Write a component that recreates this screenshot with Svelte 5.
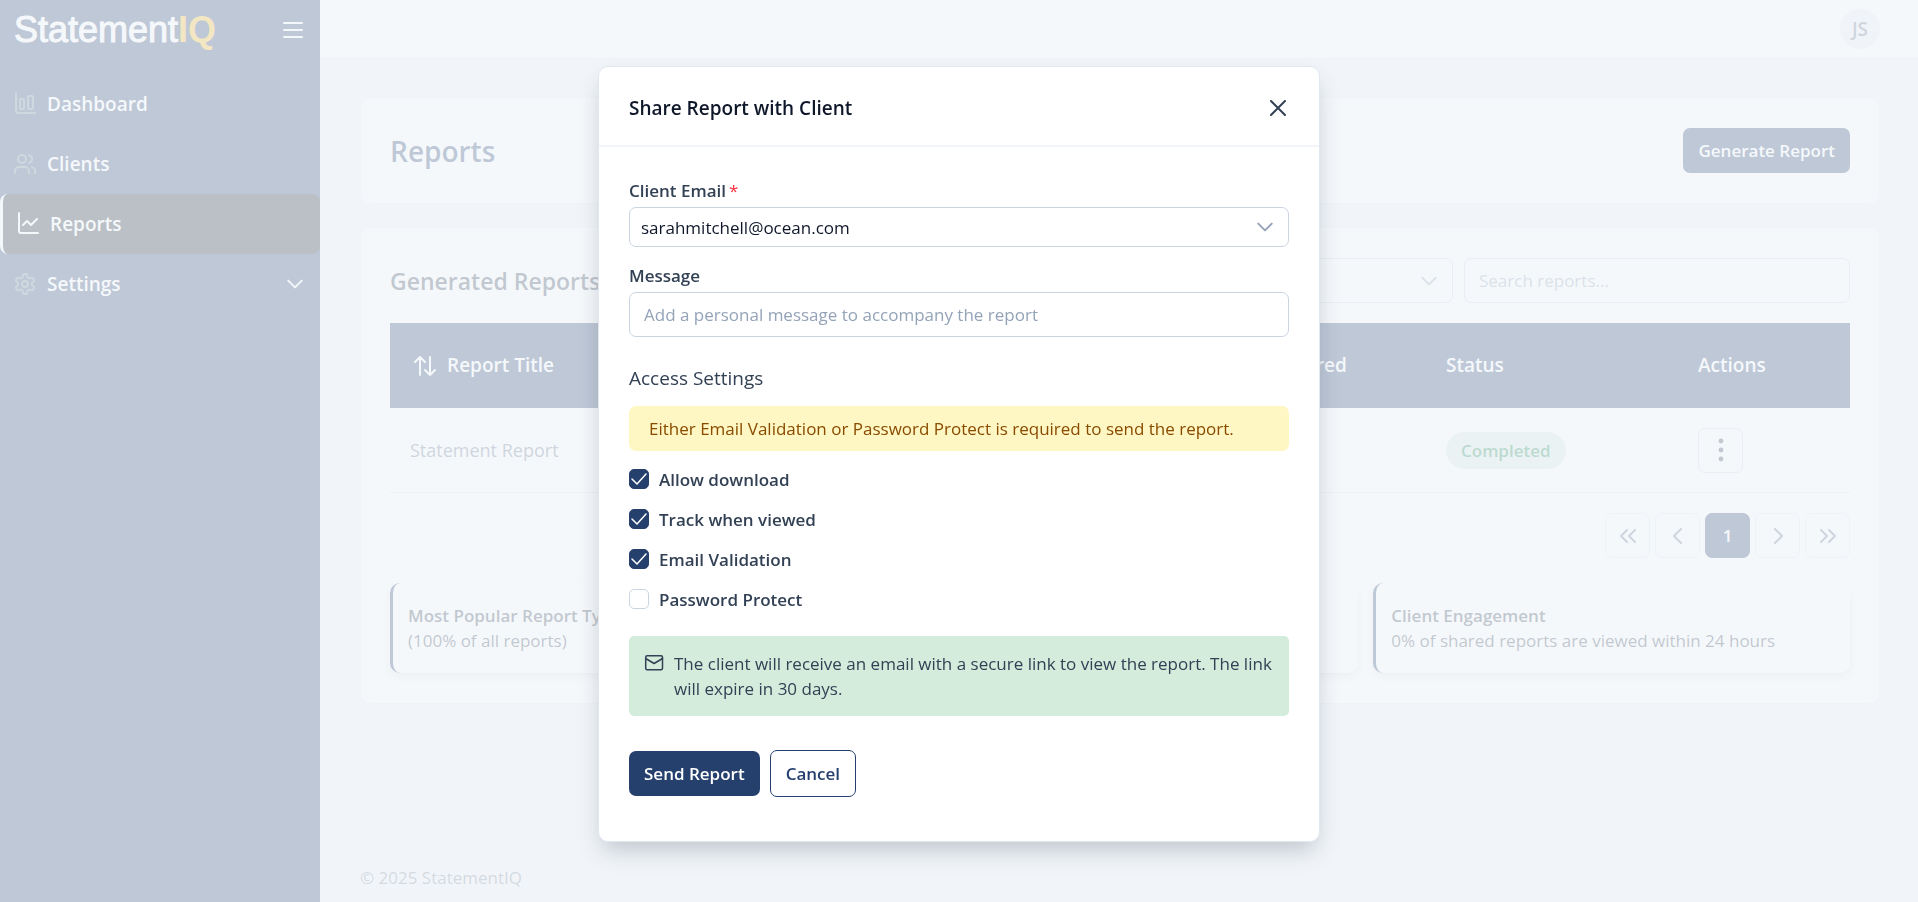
<!--
  Reports page with the "Share Report with Client" dialog open on top of it.
-->
<script>
  let open = $state(true);
  let email = $state('sarahmitchell@ocean.com');
  let message = $state('');
  let search = $state('');
  let status = $state('all');

  let access = $state([
    { id: 'download', label: 'Allow download', on: true },
    { id: 'track', label: 'Track when viewed', on: true },
    { id: 'validate', label: 'Email Validation', on: true },
    { id: 'password', label: 'Password Protect', on: false },
  ]);

  const STATS = [
    { title: 'Most Popular Report Type', text: '(100% of all reports)' },
    { title: 'Average Time to View', text: 'No reports viewed yet' },
    { title: 'Client Engagement', text: '0% of shared reports are viewed within 24 hours' },
  ];

  const close = () => (open = false);
</script>

{#snippet chevron(size)}
  <svg class="chevron" width={size} height={size} viewBox="0 0 16 16"><path d="M2 5l6 6 6-6" /></svg>
{/snippet}

<div class="app">
  <aside>
    <div class="brand">
      <a class="logo" href="#home">Statement<b>IQ</b></a>
      <button class="burger" aria-label="Toggle menu">
        <svg width="20" height="20" viewBox="0 0 20 20"><path d="M1 3h18M1 10h18M1 17h18" /></svg>
      </button>
    </div>
    <nav>
      <a href="#dashboard">
        <svg width="24" height="24" viewBox="0 0 24 24"><path d="M3 1v18a2 2 0 0 0 2 2h17" /><rect x="7" y="7" width="4" height="10" rx="1" /><rect x="15" y="4" width="5" height="13" rx="1" /></svg>
        <span>Dashboard</span>
      </a>
      <a href="#clients">
        <svg width="24" height="24" viewBox="0 0 24 24"><path d="M16 21v-2a4 4 0 0 0-4-4H6a4 4 0 0 0-4 4v2" /><circle cx="9" cy="7" r="4" /><path d="M22 21v-2a4 4 0 0 0-3-3.87M16 3.13a4 4 0 0 1 0 7.75" /></svg>
        <span>Clients</span>
      </a>
      <a href="#reports" class="active">
        <svg width="24" height="24" viewBox="0 0 24 24"><path d="M3 1v18a2 2 0 0 0 2 2h17M7 13l4-4 4 4 6-6" /></svg>
        <span>Reports</span>
      </a>
      <a href="#settings">
        <svg width="24" height="24" viewBox="0 0 24 24"><path d="M12.22 2h-.44a2 2 0 0 0-2 2v.18a2 2 0 0 1-1 1.73l-.43.25a2 2 0 0 1-2 0l-.15-.08a2 2 0 0 0-2.73.73l-.22.38a2 2 0 0 0 .73 2.73l.15.1a2 2 0 0 1 1 1.72v.51a2 2 0 0 1-1 1.74l-.15.09a2 2 0 0 0-.73 2.73l.22.38a2 2 0 0 0 2.73.73l.15-.08a2 2 0 0 1 2 0l.43.25a2 2 0 0 1 1 1.73V20a2 2 0 0 0 2 2h.44a2 2 0 0 0 2-2v-.18a2 2 0 0 1 1-1.73l.43-.25a2 2 0 0 1 2 0l.15.08a2 2 0 0 0 2.73-.73l.22-.39a2 2 0 0 0-.73-2.73l-.15-.08a2 2 0 0 1-1-1.74v-.5a2 2 0 0 1 1-1.74l.15-.09a2 2 0 0 0 .73-2.73l-.22-.38a2 2 0 0 0-2.73-.73l-.15.08a2 2 0 0 1-2 0l-.43-.25a2 2 0 0 1-1-1.73V4a2 2 0 0 0-2-2z" /><circle cx="12" cy="12" r="3" /></svg>
        <span>Settings</span>
        {@render chevron(18)}
      </a>
    </nav>
  </aside>

  <div class="page">
    <div class="topbar"><button class="avatar">JS</button></div>

    <main>
      <section class="card title-card">
        <h1>Reports</h1>
        <button class="primary">Generate Report</button>
      </section>

      <section class="card">
        <div class="toolbar">
          <h2>Generated Reports</h2>
          <div class="select filter">
            <select bind:value={status} aria-label="Status"><option value="all">All Status</option></select>
            {@render chevron(18)}
          </div>
          <input class="field search" bind:value={search} placeholder="Search reports..." aria-label="Search reports" />
        </div>

        <table>
          <colgroup><col class="c-title" /><col class="c-client" /><col class="c-date" /><col class="c-status" /><col class="c-actions" /></colgroup>
          <thead>
            <tr>
              <th>
                <span class="sort">
                  <svg width="24" height="24" viewBox="0 0 24 24"><path d="M7 21V3M2 8l5-5 5 5M17 3v18M12 16l5 5 5-5" /></svg>
                  Report Title
                </span>
              </th>
              <th>Client</th>
              <th>Date Shared</th>
              <th>Status</th>
              <th>Actions</th>
            </tr>
          </thead>
          <tbody>
            <tr>
              <td>Statement Report</td>
              <td></td>
              <td></td>
              <td><span class="pill">Completed</span></td>
              <td>
                <button class="square kebab" aria-label="Row actions">
                  <svg width="6" height="24" viewBox="0 0 6 24"><circle cx="3" cy="3" r="2.4" /><circle cx="3" cy="12" r="2.4" /><circle cx="3" cy="21" r="2.4" /></svg>
                </button>
              </td>
            </tr>
          </tbody>
        </table>

        <div class="pager">
          <button class="square" aria-label="First page"><svg width="20" height="20" viewBox="0 0 20 20"><path d="M9 4l-6 6 6 6M17 4l-6 6 6 6" /></svg></button>
          <button class="square" aria-label="Previous page"><svg width="20" height="20" viewBox="0 0 20 20"><path d="M13 3l-7 7 7 7" /></svg></button>
          <button class="square current">1</button>
          <button class="square" aria-label="Next page"><svg width="20" height="20" viewBox="0 0 20 20"><path d="M7 3l7 7-7 7" /></svg></button>
          <button class="square" aria-label="Last page"><svg width="20" height="20" viewBox="0 0 20 20"><path d="M3 4l6 6-6 6M11 4l6 6-6 6" /></svg></button>
        </div>

        <div class="stats">
          {#each STATS as s}
            <div class="stat"><strong>{s.title}</strong><span>{s.text}</span></div>
          {/each}
        </div>
      </section>
    </main>

    <footer>© 2025 StatementIQ</footer>
  </div>
</div>

{#if open}
  <div class="backdrop">
    <div class="modal" role="dialog" aria-modal="true" aria-labelledby="share-title">
      <header>
        <h3 id="share-title">Share Report with Client</h3>
        <button class="close" aria-label="Close" onclick={close}>
          <svg width="16" height="16" viewBox="0 0 16 16"><path d="M1 1l14 14M15 1L1 15" /></svg>
        </button>
      </header>

      <form onsubmit={(e) => e.preventDefault()}>
        <div class="group">
          <label for="email">Client Email<span class="req">*</span></label>
          <div class="select">
            <select id="email" bind:value={email}><option>sarahmitchell@ocean.com</option></select>
            {@render chevron(18)}
          </div>
        </div>
        <div class="group">
          <label for="message">Message</label>
          <input id="message" class="field" bind:value={message} placeholder="Add a personal message to accompany the report" />
        </div>

        <h4>Access Settings</h4>
        <p class="warn">Either Email Validation or Password Protect is required to send the report.</p>
        <div class="checks">
          {#each access as a}
            <label class="check" for={a.id}>
              <span class="box">
                <input type="checkbox" id={a.id} bind:checked={a.on} />
                <svg width="20" height="20" viewBox="0 0 20 20"><path d="M3 10l5 5 9-10" /></svg>
              </span>
              {a.label}
            </label>
          {/each}
        </div>

        <div class="note">
          <svg width="20" height="20" viewBox="0 0 20 20"><rect x="1.7" y="2.7" width="16.8" height="14" rx="1.5" /><path d="M1.7 5.5l8.4 5 8.4-5" /></svg>
          <p>The client will receive an email with a secure link to view the report. The link will expire in 30 days.</p>
        </div>

        <div class="actions">
          <button class="primary" type="submit">Send Report</button>
          <button class="outline" type="button" onclick={close}>Cancel</button>
        </div>
      </form>
    </div>
  </div>
{/if}

<style>
  :global(body) { margin: 0; background: #f0f4f9; }
  .app, .backdrop { font-family: "Segoe UI", "Open Sans", "Noto Sans", sans-serif; font-size: 17px; line-height: 25px; color: #334155; }
  .app *, .backdrop * { box-sizing: border-box; }
  .app { display: flex; min-height: 100vh; }
  button, input, select { font: inherit; color: inherit; }
  button { cursor: pointer; }
  h1, h2, h3, h4, p { margin: 0; }
  a { color: inherit; text-decoration: none; }
  svg { fill: none; stroke: currentColor; stroke-width: 2; stroke-linecap: round; stroke-linejoin: round; flex: none; display: block; }

  aside { width: 320px; flex: none; background: #26406e; color: #fff; }
  .brand { height: 60px; padding: 0 17px 0 14px; display: flex; align-items: center; justify-content: space-between; }
  .logo { font-family: "Liberation Sans", Arial, sans-serif; font-size: 36px; line-height: 60px; -webkit-text-stroke: 1px #fff; }
  .logo b { color: #f5b81c; -webkit-text-stroke: 0; }
  .burger { background: none; border: none; padding: 0; color: #fff; }
  nav { padding-top: 14px; font-size: 19px; font-weight: 600; }
  nav a { height: 60px; padding: 0 16px 0 13px; display: flex; align-items: center; gap: 10px; border-radius: 8px; }
  nav a > svg:first-child { color: #64808f; }
  nav .chevron { margin-left: auto; }
  nav a.active { background: #15222e; border-left: 3px solid #fff; }
  nav a.active > svg:first-child { color: #fff; }
  .chevron { stroke-width: 1.7; }

  .page { flex: 1; min-width: 0; display: flex; flex-direction: column; }
  .topbar { height: 59px; padding: 0 38px; background: #fff; border-bottom: 1px solid #e9eef5; display: flex; align-items: center; justify-content: flex-end; }
  .avatar { width: 40px; height: 40px; border: none; border-radius: 50%; padding: 0; background: #eceff6; color: #64748b; font-size: 19px; font-weight: 600; }
  main { flex: 1; padding: 38px 38px 0 40px; display: flex; flex-direction: column; gap: 23px; }
  .card { background: #fff; border: 1px solid #e9eef5; border-radius: 10px; padding: 30px 29px; }
  .title-card { display: flex; align-items: center; justify-content: space-between; }
  h1 { font-size: 28px; line-height: 40px; font-weight: 600; color: #26406e; }
  h2 { font-size: 23px; line-height: 30px; font-weight: 600; color: #334155; flex: 1; }

  .primary { height: 45px; padding: 0 15px; border: none; border-radius: 7px; background: #26406e; color: #fff; font-weight: 600; }
  .outline { height: 47px; padding: 0 15px; border: 1px solid #26406e; border-radius: 7px; background: #fff; color: #26406e; font-weight: 600; }
  .field { width: 100%; height: 45px; padding: 0 14px; border: 1px solid #cbd5e1; border-radius: 7px; background: #fff; display: block; }
  .field::placeholder { color: #94a3b8; opacity: 1; }
  .select { position: relative; }
  .select select { appearance: none; width: 100%; height: 40px; padding: 0 44px 0 11px; border: 1px solid #cbd5e1; border-radius: 7px; background: #fff; color: #0f172a; display: block; }
  .select .chevron { position: absolute; right: 15px; top: 50%; margin-top: -9px; color: #94a3b8; pointer-events: none; }

  .toolbar { display: flex; align-items: center; gap: 11px; margin-bottom: 20px; }
  .toolbar .filter { width: 250px; }
  .toolbar .filter select { height: 45px; }
  .toolbar .search { width: 386px; }

  table { width: 100%; border-collapse: separate; border-spacing: 0; table-layout: fixed; }
  .c-title { width: 29%; }
  .c-date { width: 212px; }
  .c-status { width: 252px; }
  .c-actions { width: 172px; }
  th { height: 85px; padding: 0 20px; background: #26406e; color: #fff; font-size: 19px; font-weight: 600; text-align: left; }
  .sort { display: flex; align-items: center; gap: 10px; padding-left: 3px; }
  td { height: 85px; padding: 0 20px; border-bottom: 1px solid #dfe7f0; color: #64748b; font-size: 18px; }
  .pill { display: inline-block; padding: 6px 15px; border-radius: 20px; background: #d1e7dd; color: #198754; font-size: 17px; font-weight: 600; }
  .square { width: 45px; height: 45px; padding: 0; border: 1px solid #dfe7f0; border-radius: 7px; background: #fff; color: #64748b; display: flex; align-items: center; justify-content: center; }
  .kebab { border-color: #cbd5e1; color: #334155; }
  .kebab svg { fill: currentColor; stroke: none; }
  .pager { display: flex; justify-content: flex-end; gap: 5px; margin: 20px 0 25px; }
  .current { background: #26406e; border-color: #26406e; color: #fff; font-weight: 600; }
  .stats { display: grid; grid-template-columns: repeat(3, 1fr); gap: 15px; }
  .stat { min-height: 90px; padding: 20px 15px; border-left: 3px solid #26406e; border-radius: 10px; box-shadow: 0 4px 8px rgba(0, 0, 0, 0.12); white-space: nowrap; }
  .stat strong, .stat span { display: block; }
  .stat strong { font-weight: 600; }
  footer { padding: 0 40px 12px; color: #7c8694; }

  .backdrop { position: fixed; inset: 0; padding-top: 66px; background: rgba(241, 245, 249, 0.75); overflow: auto; }
  .modal { width: min(722px, 94vw); margin: 0 auto; background: #fff; border: 1px solid #e2e8f0; border-radius: 10px; box-shadow: 0 12px 24px -4px rgba(15, 23, 42, 0.22); }
  header { height: 80px; padding: 4px 33px 0 30px; border-bottom: 2px solid #f1f5f9; display: flex; align-items: center; justify-content: space-between; }
  h3 { font-size: 19px; font-weight: 600; color: #0f172a; }
  .close { background: none; border: none; padding: 0; color: #334155; }
  form { padding: 31px 30px 44px; }
  .group { margin-bottom: 16px; }
  .group label { display: block; margin-bottom: 4px; font-weight: 600; }
  .req { color: #ff2c3c; margin-left: 3px; font-weight: 400; }
  h4 { font-size: 19px; font-weight: 400; margin: 29px 0 15px; }
  .warn { padding: 10px 20px; border-radius: 7px; background: #fef7c3; color: #894b00; }
  .checks { padding-top: 8px; }
  .check { height: 40px; display: flex; align-items: center; gap: 10px; font-weight: 600; }
  .box { position: relative; width: 20px; height: 20px; }
  .box input { appearance: none; display: block; margin: 0; width: 20px; height: 20px; border: 1px solid #cbd5e1; border-radius: 5px; background: #fff; }
  .box input:checked { background: #26406e; border-color: #26406e; }
  .box svg { position: absolute; inset: 0; color: #fff; stroke-width: 1.5; pointer-events: none; }
  .note { margin-top: 17px; padding: 15px; border-radius: 5px; background: #d4ecdb; display: flex; gap: 10px; }
  .note svg { margin-top: 2px; stroke-width: 1.5; }
  .actions { margin-top: 34px; display: flex; align-items: center; gap: 10px; }
</style>
